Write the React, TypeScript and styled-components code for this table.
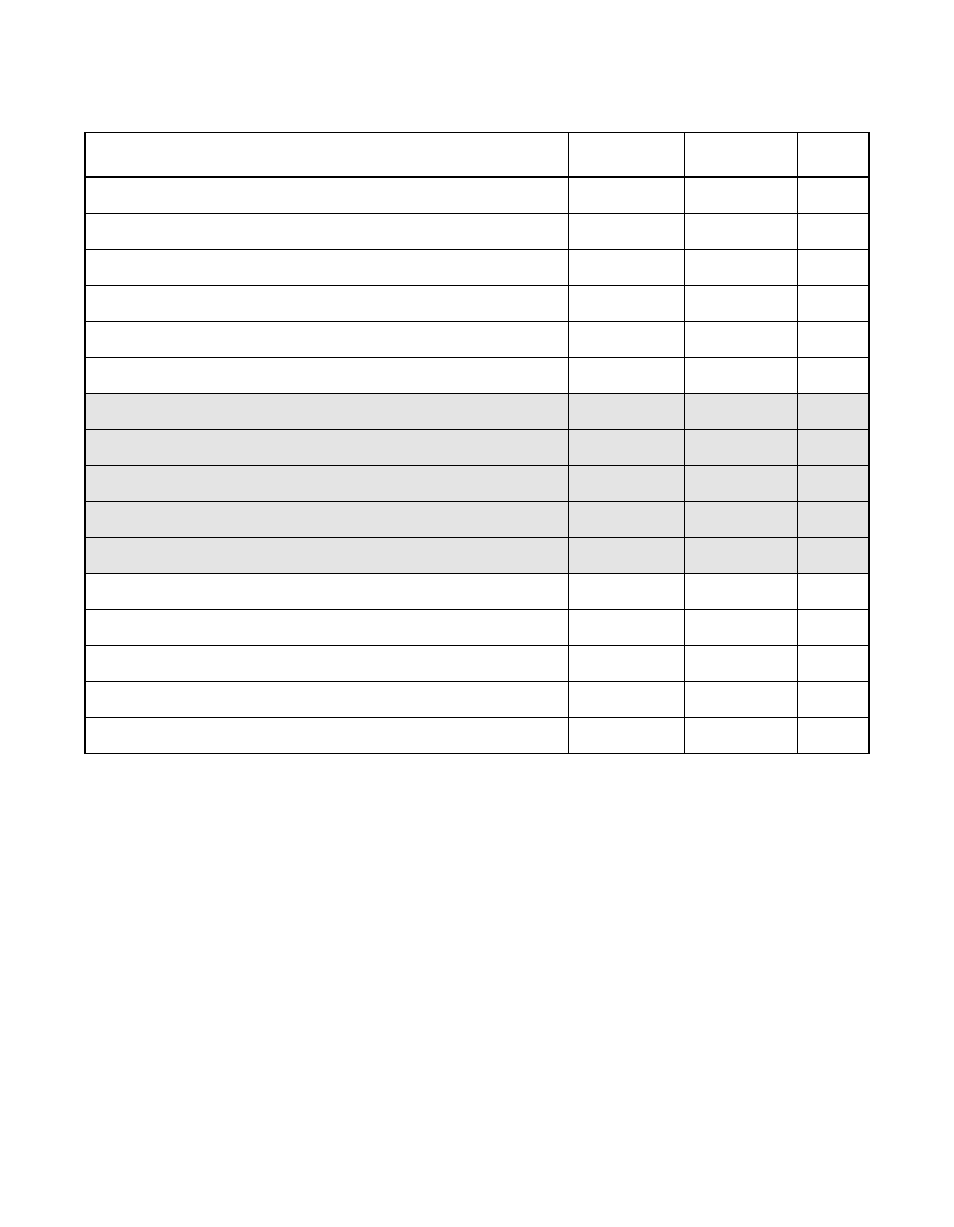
import React from 'react';
import styled, { createGlobalStyle } from 'styled-components';

const GlobalStyle = createGlobalStyle`
  html, body {
    margin: 0;
    padding: 0;
    background: #ffffff;
    font-family: "Liberation Sans", Arial, sans-serif;
  }
`;

const shadedRows = [6, 7, 8, 9, 10];
const rowCount = 16;
const columns = 4;

const App: React.FC = () => {
  const rows = Array.from({ length: rowCount }, (_, i) => i);
  const cols = Array.from({ length: columns }, (_, i) => i);

  return (
    <Page>
      <GlobalStyle />
      <Sheet rows={rowCount}>
        {cols.map((c) => (
          <HeaderCell key={`h-${c}`} last={c === columns - 1} />
        ))}
        {rows.map((r) =>
          cols.map((c) => (
            <Cell
              key={`${r}-${c}`}
              shaded={shadedRows.includes(r)}
              last={c === columns - 1}
            />
          ))
        )}
      </Sheet>
    </Page>
  );
};

const Page = styled.div`
  width: 954px;
  min-height: 1227px;
  padding: 132px 0 0 84px;
  box-sizing: border-box;
`;

const Sheet = styled.div<{ rows: number }>`
  display: grid;
  grid-template-columns: 483px 116px 113px 70px;
  grid-template-rows: 45px repeat(${({ rows }) => rows}, 36px);
  width: 786px;
  box-sizing: border-box;
  border-top: 1px solid #000;
  border-left: 2px solid #000;
  border-right: 2px solid #000;
`;

const Cell = styled.div<{ shaded?: boolean; last?: boolean }>`
  box-sizing: border-box;
  background: ${({ shaded }) => (shaded ? '#e4e4e4' : '#ffffff')};
  border-bottom: 1px solid #000;
  border-right: ${({ last }) => (last ? 'none' : '1px solid #000')};
`;

const HeaderCell = styled(Cell)`
  border-bottom: 2px solid #000;
`;

export default App;
